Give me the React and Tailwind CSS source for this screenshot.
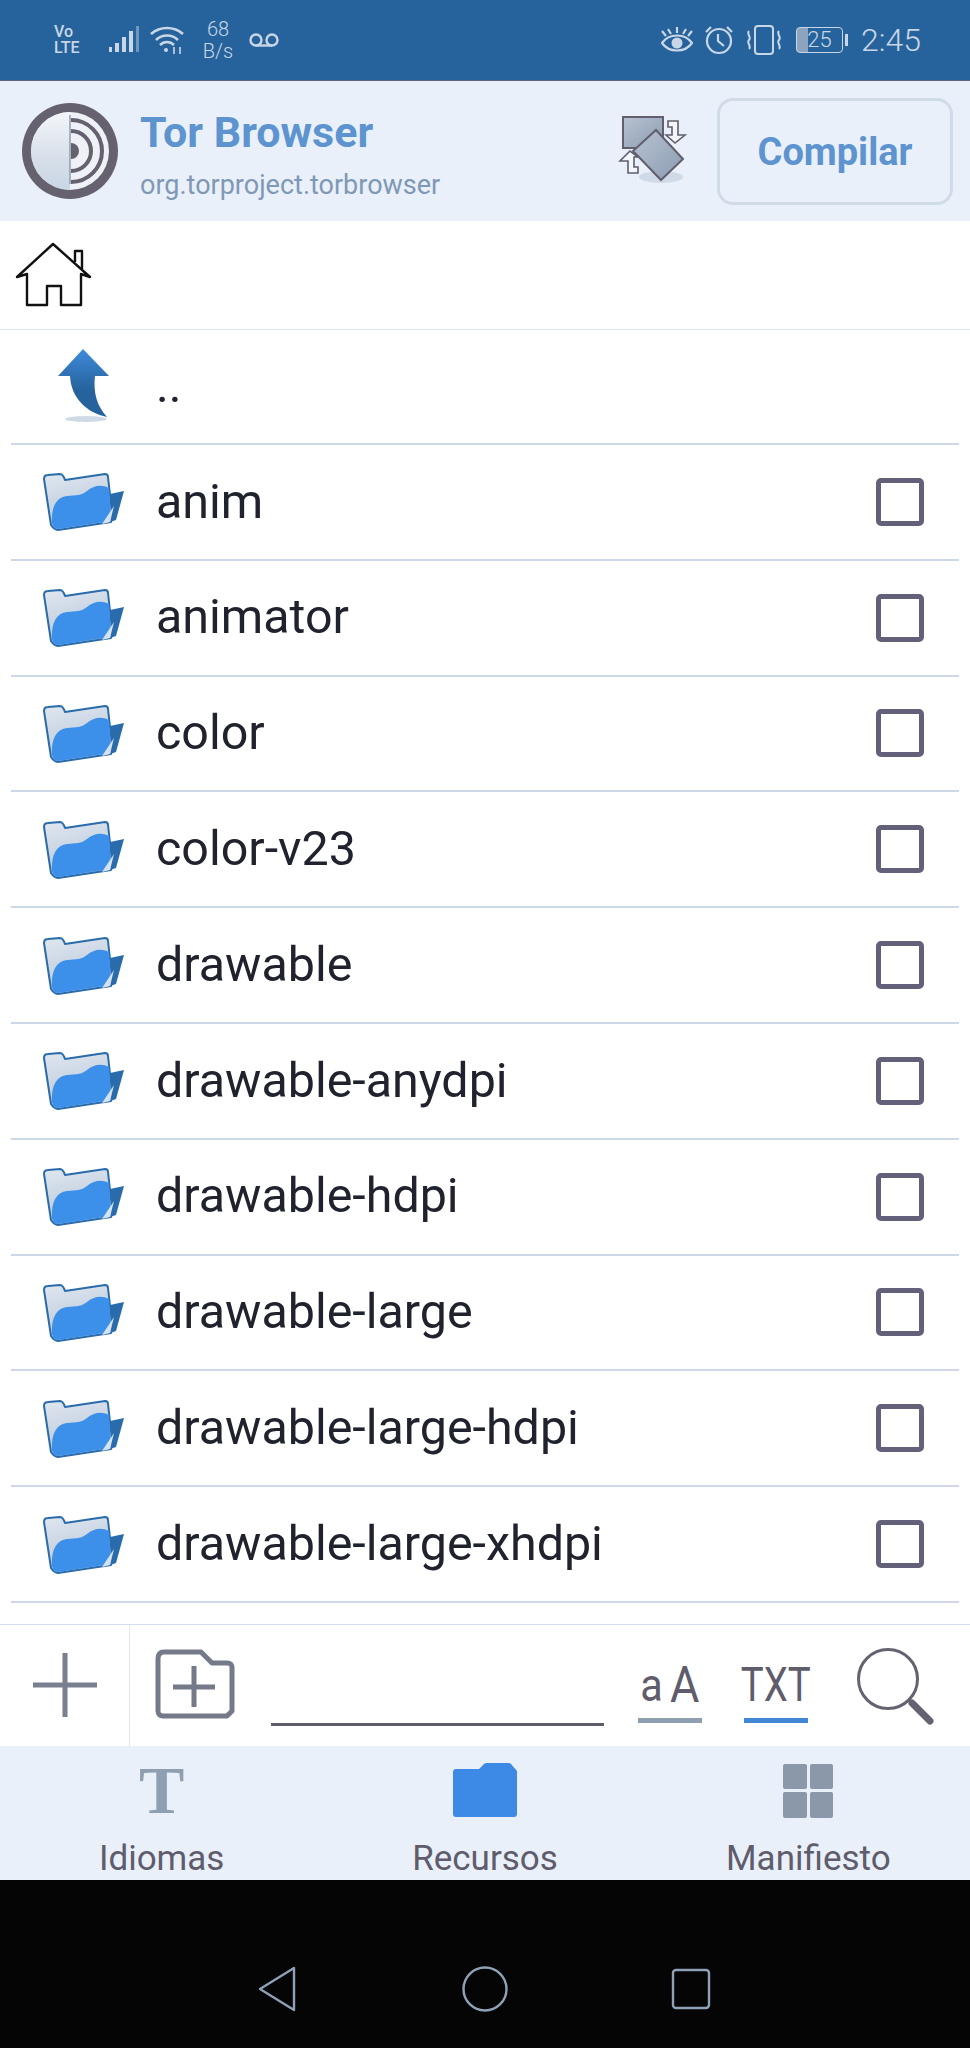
const folders = [
  "anim",
  "animator",
  "color",
  "color-v23",
  "drawable",
  "drawable-anydpi",
  "drawable-hdpi",
  "drawable-large",
  "drawable-large-hdpi",
  "drawable-large-xhdpi",
];

function StatusLeft() {
  return (
    <div className="flex items-center text-[#c9d6e6]">
      <div className="ml-[54px] w-[30px] text-[16px] leading-[16px] font-medium">
        <div>Vo</div>
        <div>LTE</div>
      </div>
      <svg className="ml-[24px]" width="32" height="32" viewBox="0 0 32 32" fill="currentColor">
        <rect x="1" y="23" width="3" height="5" />
        <rect x="7" y="19" width="4" height="9" />
        <rect x="14" y="13" width="4" height="15" />
        <rect x="21" y="7" width="4" height="21" />
        <rect x="28" y="2" width="3" height="26" opacity="0.45" />
      </svg>
      <svg className="ml-[9px]" width="36" height="30" viewBox="0 0 36 30" fill="none" stroke="currentColor" strokeWidth="2.6">
        <path d="M2 9 C11 1 25 1 34 9" />
        <path d="M7 15 C13 9 23 9 29 15" />
        <path d="M11 20 C15 16 21 16 25 20" />
        <circle cx="17" cy="25" r="2" fill="currentColor" stroke="none" />
        <path d="M25 22 V29 M31 22 V29" strokeWidth="1.6" />
      </svg>
      <div className="ml-[15px] w-[36px] text-center text-[20px] leading-[22px] font-light">
        <div>68</div>
        <div>B/s</div>
      </div>
      <svg className="ml-[12px]" width="32" height="18" viewBox="0 0 32 18" fill="none" stroke="currentColor" strokeWidth="2.4">
        <circle cx="8" cy="9" r="5.5" />
        <circle cx="24" cy="9" r="5.5" />
        <path d="M8 14.5 H24" />
      </svg>
    </div>
  );
}

function StatusRight() {
  return (
    <div className="flex items-center text-[#c9d6e6]">
      <svg width="32" height="30" viewBox="0 0 32 30" fill="none" stroke="currentColor" strokeWidth="2.2">
        <path d="M1 18 C8 8 24 8 31 18 C24 28 8 28 1 18 Z" />
        <circle cx="16" cy="18" r="5.5" fill="currentColor" stroke="none" />
        <path d="M16 2 V8 M7 4 L10 9 M25 4 L22 9 M1 6 L5 11 M31 6 L27 11" />
      </svg>
      <svg className="ml-[11px]" width="30" height="30" viewBox="0 0 30 30" fill="none" stroke="currentColor" strokeWidth="2.2">
        <circle cx="15" cy="16" r="12" />
        <path d="M14 9 V16 L20 21" />
        <path d="M2 7 L7 2 M28 7 L23 2" />
      </svg>
      <svg className="ml-[11px]" width="38" height="30" viewBox="0 0 38 30" fill="none" stroke="currentColor" strokeWidth="2">
        <rect x="10" y="1" width="18" height="28" rx="3" />
        <path d="M4 6 C1 9 7 12 4 15 C1 18 7 21 4 24" />
        <path d="M34 6 C31 9 37 12 34 15 C31 18 37 21 34 24" />
      </svg>
      <div className="ml-[13px] flex items-center">
        <div className="flex h-[26px] w-[47px] items-center justify-center rounded-[4px] border-[1.5px] border-[#c9d6e6] bg-[linear-gradient(90deg,#8ea4be_0,#8ea4be_24%,transparent_24%)] text-[22px] leading-none font-light">
          25
        </div>
        <div className="ml-[2px] h-[12px] w-[3px] bg-[#c9d6e6]" />
      </div>
      <div className="ml-[13px] mr-[49px] text-[32px] leading-none font-light">2:45</div>
    </div>
  );
}

function TorLogo() {
  return (
    <svg width="98" height="98" viewBox="0 0 98 98" fill="none">
      <defs>
        <linearGradient id="torLeft" x1="0" y1="0" x2="0" y2="1">
          <stop offset="0" stopColor="#f4f6fa" />
          <stop offset="0.6" stopColor="#d6dfe9" />
          <stop offset="1" stopColor="#c9d6e4" />
        </linearGradient>
      </defs>
      <circle cx="49" cy="49" r="48" fill="#66616f" />
      <circle cx="49" cy="49" r="39" fill="#eef2f7" />
      <path d="M49 10 A39 39 0 0 0 49 88 Z" fill="url(#torLeft)" />
      <path d="M50 18 A31 31 0 0 1 50 80" stroke="#66616f" strokeWidth="4" />
      <path d="M50 29 A20 20 0 0 1 50 69" stroke="#66616f" strokeWidth="4" />
      <path d="M50 41 A8 8 0 0 1 50 57 Z" fill="#66616f" />
      <path d="M49 13 V82" stroke="#8f9db0" strokeWidth="1.5" />
    </svg>
  );
}

function SwapIcon() {
  return (
    <svg width="76" height="72" viewBox="0 0 76 72" fill="none">
      <defs>
        <linearGradient id="swapFill" x1="0" y1="0" x2="1" y2="1">
          <stop offset="0" stopColor="#b8c3d2" />
          <stop offset="1" stopColor="#8c9cb2" />
        </linearGradient>
      </defs>
      <ellipse cx="47" cy="62" rx="22" ry="6" fill="#d0dae6" />
      <rect x="9" y="2" width="40" height="31" fill="url(#swapFill)" stroke="#615e6d" strokeWidth="2" />
      <path d="M42 15 L69 44 L47 65 L19 36 Z" fill="url(#swapFill)" stroke="#615e6d" strokeWidth="2" />
      <path d="M54 6 H64 V20 H71 L61 28 L52 20 H58 V12 H54 Z" fill="#f3f6fb" stroke="#615e6d" strokeWidth="1.6" />
      <path d="M24 58 H14 V46 H6 L16 36 L24 42 H20 V52 H24 Z" fill="#f3f6fb" stroke="#615e6d" strokeWidth="1.6" />
    </svg>
  );
}

function HomeIcon() {
  return (
    <svg width="78" height="66" viewBox="0 0 78 66" fill="none" stroke="#111" strokeWidth="2.4" strokeLinejoin="round">
      <path d="M2 35 L38 2 L75 35 L66 32 V63 H46 V44 H32 V63 H12 V32 Z" />
      <path d="M60 20 V9 H67 V27" />
    </svg>
  );
}

function UpArrow() {
  return (
    <svg className="mb-[3px]" width="54" height="74" viewBox="0 0 54 74" fill="none">
      <defs>
        <linearGradient id="upFill" x1="0" y1="0" x2="0" y2="1">
          <stop offset="0" stopColor="#3f8bdc" />
          <stop offset="0.6" stopColor="#26639c" />
        </linearGradient>
      </defs>
      <ellipse cx="29" cy="71" rx="21" ry="3" fill="#d0dae6" />
      <path d="M26 1 L52 28 H38 C36 45 40 58 50 69 C30 65 14 50 13 28 H1 Z" fill="url(#upFill)" strokeLinejoin="round" />
    </svg>
  );
}

function FolderIcon({ id }) {
  return (
    <svg className="mt-[3px]" width="84" height="60" viewBox="0 0 84 60" fill="none">
      <defs>
        <linearGradient id={id} x1="0" y1="0" x2="0.3" y2="1">
          <stop offset="0" stopColor="#dfe6ef" />
          <stop offset="1" stopColor="#b9c8da" />
        </linearGradient>
      </defs>
      <path d="M67 21 L81 18 L73 47 L64 50 Z" fill="#2a6cab" />
      <path d="M1 6 C1 3 3 2 5 2 L17 1 C20 1 21 4 22 7 L62 1 C64 1 65 2 65 4 L69 40 C69 44 69 47 68 49 L15 57 C12 57 10 55 8 52 Z" fill={`url(#${id})`} stroke="#2a6cab" strokeWidth="2" strokeLinejoin="round" />
      <path d="M9 50 C8 33 14 24 24 23 C33 22 38 23 44 18 C50 13 58 11 66 15 L68 42 C68 46 68 48 67 48 L15 56 C12 56 10 54 9 50 Z" fill="#3d90ea" />
      <path d="M59 51 L71 33 L67 49 Z" fill="#d6e2f0" />
    </svg>
  );
}

function FolderRow({ name, index }) {
  return (
    <div className="mx-[11px] flex h-[115.8px] shrink-0 items-center border-b-2 border-[#ccd8e8]">
      <div className="ml-[32px] w-[113px]">
        <FolderIcon id={`folderPaper${index}`} />
      </div>
      <div className="flex-1 text-[48.4px] leading-none text-[#20232d]">{name}</div>
      <div className="mr-[35px] h-[48px] w-[48px] rounded-[5px] border-[5px] border-[#63607a]" />
    </div>
  );
}

function Toolbar() {
  return (
    <div className="flex h-[122px] shrink-0 border-t border-[#d3dff0]">
      <div className="flex w-[130px] items-center justify-center border-r border-[#dfe7f2]">
        <svg width="64" height="64" viewBox="0 0 64 64" stroke="#7a7f90" strokeWidth="5">
          <path d="M32 0 V64 M0 32 H64" />
        </svg>
      </div>
      <svg className="ml-[25px] mt-[24px]" width="80" height="70" viewBox="0 0 80 70" fill="none" stroke="#757a8b" strokeWidth="5" strokeLinejoin="round">
        <path d="M3 10 C3 5 5 3 9 3 H46 L57 14 H72 C76 14 77 16 77 19 V62 L72 67 H8 C5 67 3 65 3 62 Z" />
        <path d="M39 17 V58 M18 38 H60" />
      </svg>
      <div className="mb-[20px] ml-[36px] w-[333px] self-end border-b-[3px] border-[#5f5c6c]" />
      <div className="ml-[33px] mt-[39px] flex w-[65px] flex-col items-center">
        <div className="flex h-[54px] scale-x-[0.9] items-center gap-[8px] pb-[12px] leading-none text-[#5f5c6c]">
          <span className="text-[46px]">a</span>
          <span className="text-[50px]">A</span>
        </div>
        <div className="h-[5px] w-[64px] bg-[#8f9fb2]" />
      </div>
      <div className="ml-[39px] mt-[39px] flex w-[70px] flex-col items-center">
        <div className="flex h-[54px] scale-x-[0.8] items-center pb-[12px] text-[48px] leading-none text-[#5f5c6c]">TXT</div>
        <div className="h-[5px] w-[64px] bg-[#4287d6]" />
      </div>
      <svg className="ml-[46px] mt-[23px]" width="78" height="78" viewBox="0 0 78 78" fill="none" stroke="#656271">
        <circle cx="31" cy="31" r="29.5" strokeWidth="3" />
        <path d="M55 55 L73 73" strokeWidth="7" strokeLinecap="round" />
      </svg>
    </div>
  );
}

function Tab({ label, children }) {
  return (
    <div className="flex flex-col items-center">
      <div className="flex h-[56px] items-end">{children}</div>
      <div className="mt-[21px] text-[35px] leading-[40px] text-[#5f5c6c]">{label}</div>
    </div>
  );
}

function TabBar() {
  return (
    <div className="grid h-[134px] shrink-0 grid-cols-3 bg-[#e9f0fa] pt-[16px]">
      <Tab label="Idiomas">
        <div className="font-['Liberation_Serif',serif] text-[68px] leading-[56px] font-bold text-[#8f9fb2]">T</div>
      </Tab>
      <Tab label="Recursos">
        <svg width="66" height="56" viewBox="0 0 66 56" fill="#3d8ae6">
          <path d="M1 10 C1 8 2 7 4 7 H27 L32 2 C33 1 34 1 35 1 H56 C57 1 58 1 59 2 L65 9 V52 C65 54 64 55 62 55 H4 C2 55 1 54 1 52 Z" />
        </svg>
      </Tab>
      <Tab label="Manifiesto">
        <div className="grid h-[54px] w-[50px] grid-cols-2 gap-[3px]">
          <div className="rounded-[2px] bg-[#8a98aa]" />
          <div className="rounded-[2px] bg-[#8a98aa]" />
          <div className="rounded-[2px] bg-[#8a98aa]" />
          <div className="rounded-[2px] bg-[#8a98aa]" />
        </div>
      </Tab>
    </div>
  );
}

function NavBar() {
  return (
    <div className="flex flex-1 items-center bg-[#050505] pt-[50px]">
      <svg className="ml-[257px]" width="40" height="46" viewBox="0 0 40 46" fill="none" stroke="#8fa1b7" strokeWidth="2.4" strokeLinejoin="round">
        <path d="M3 23 L37 2 V44 Z" />
      </svg>
      <svg className="ml-[165px]" width="46" height="46" viewBox="0 0 46 46" fill="none" stroke="#8fa1b7" strokeWidth="2.4">
        <circle cx="23" cy="23" r="21.5" />
      </svg>
      <svg className="ml-[163px]" width="40" height="42" viewBox="0 0 40 42" fill="none" stroke="#8fa1b7" strokeWidth="2.4">
        <rect x="2" y="2" width="36" height="38" rx="3" />
      </svg>
    </div>
  );
}

export default function App() {
  return (
    <div className="flex h-[2048px] w-[970px] flex-col overflow-hidden bg-white font-['Roboto','Liberation_Sans',sans-serif]">
      <div className="flex h-[81px] shrink-0 items-center justify-between border-b border-[#5c6478] bg-[#26639c]">
        <StatusLeft />
        <StatusRight />
      </div>

      <div className="flex h-[140px] shrink-0 items-center bg-[#e9f0fa]">
        <div className="ml-[21px]">
          <TorLogo />
        </div>
        <div className="ml-[21px] flex-1 pt-[7px]">
          <div className="text-[43px] leading-[48px] font-bold text-[#5d94cf]">Tor Browser</div>
          <div className="mt-[13px] text-[27px] leading-[32px] text-[#7f98b5]">org.torproject.torbrowser</div>
        </div>
        <SwapIcon />
        <div className="mr-[17px] ml-[27px] flex h-[107px] w-[236px] items-center justify-center rounded-[16px] border-[3px] border-[#d0dbe8] bg-[#eaf0f9] pt-[2px] text-[38px] font-bold text-[#5d94cf]">
          Compilar
        </div>
      </div>

      <div className="flex h-[109px] shrink-0 items-center border-b border-[#dde6f2] pl-[15px]">
        <HomeIcon />
      </div>

      <div className="mx-[11px] flex h-[115px] shrink-0 items-center border-b-2 border-[#ccd8e8]">
        <div className="ml-[46px] w-[99px]">
          <UpArrow />
        </div>
        <div className="text-[48.4px] leading-none text-[#20232d]">..</div>
      </div>

      {folders.map((name, i) => (
        <FolderRow key={name} name={name} index={i} />
      ))}

      <div className="h-[21px] shrink-0" />
      <Toolbar />
      <TabBar />
      <NavBar />
    </div>
  );
}
